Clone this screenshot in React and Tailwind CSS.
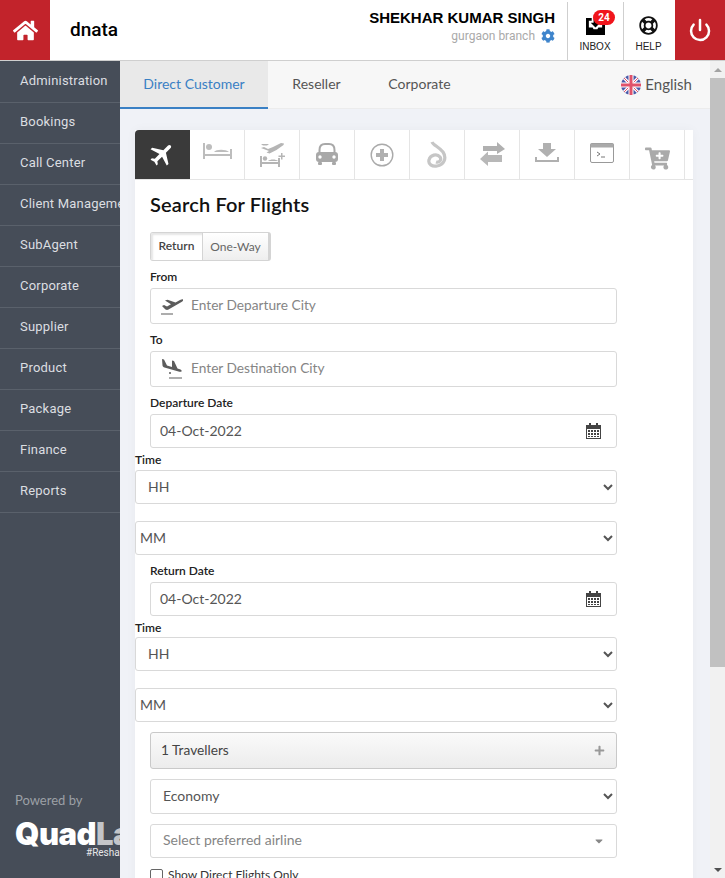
import { Power } from "lucide-react";
import { FaHome, FaCog, FaCartPlus, FaPlus, FaCaretDown, FaRegLifeRing } from "react-icons/fa";
import { MdFlight } from "react-icons/md";

const MENU = ["Administration", "Bookings", "Call Center", "Client Management", "SubAgent", "Corporate", "Supplier", "Product", "Package", "Finance", "Reports"];

/* ---------------- ICONS ---------------- */
const BedIcon = () => (
  <svg width="29" height="16" viewBox="0 0 29 16" fill="#bdbdbd" className="mb-[7px]">
    <rect x="0" y="0" width="2" height="16" />
    <rect x="27" y="6" width="2" height="10" />
    <rect x="0" y="11" width="29" height="2" />
    <circle cx="6" cy="4" r="3" />
    <path d="M11 9c2-3 12-3 15 0z" />
  </svg>
);

const FlightHotelIcon = () => (
  <svg width="25" height="24" viewBox="0 0 25 24" fill="#b5b5b5">
    <path d="M1 5l3-1 4 2 5-2 8-4 3 .5-.5 1.500-7 5-7 3.500-3-1 2.500-1.500z" />
    <path d="M1 1h8l-2 1.500H3z" />
    <rect x="0" y="13" width="2" height="11" />
    <rect x="18" y="15" width="2" height="9" />
    <rect x="0" y="19" width="20" height="2" />
    <circle cx="5" cy="15.500" r="2.200" />
    <path d="M8 18c2-2 8-2 10 0z" />
    <path d="M21 10h1.500v2.500H25V14h-2.500v2.500H21V14h-2.500v-1.500H21z" />
  </svg>
);

const CarIcon = () => (
  <svg width="22" height="23" viewBox="0 0 22 23" fill="#a8a8a8">
    <path d="M3.500 10V7c0-3.500 2-6 5.500-6h4c3.500 0 5.500 2.500 5.500 6v3" fill="none" stroke="#a8a8a8" strokeWidth="2" />
    <rect x="0" y="9" width="22" height="10" rx="3" />
    <circle cx="4" cy="14" r="1.700" fill="#fff" />
    <circle cx="18" cy="14" r="1.700" fill="#fff" />
    <rect x="2" y="19" width="4" height="3" rx="1" />
    <rect x="16" y="19" width="4" height="3" rx="1" />
  </svg>
);

const MedicalIcon = () => (
  <svg width="24" height="24" viewBox="0 0 24 24">
    <circle cx="12" cy="12" r="10.800" fill="none" stroke="#aaa" strokeWidth="1.400" />
    <path d="M10 6h4v4h4v4h-4v4h-4v-4H6v-4h4z" fill="#b0b0b0" />
  </svg>
);

const ScribbleIcon = () => (
  <svg width="20" height="27" viewBox="0 0 20 27" fill="none" stroke="#c6c6c6" strokeWidth="3.200">
    <path d="M5 1c1 3 7 5 11 10 4 6 1 13-6 14-5 1-9-2-8-6 1-5 8-7 11-3 2 3-1 6-4 5" />
  </svg>
);

const ExchangeIcon = () => (
  <svg width="25" height="25" viewBox="0 0 25 25" fill="#b0b0b0">
    <path d="M3 4h14V0l8 7-8 5V9H3z" />
    <path d="M22 13H8V9.500L0 17l8 7v-4h14z" fill="#b8b8b8" />
  </svg>
);

const DownloadIcon = () => (
  <svg width="24" height="19" viewBox="0 0 24 19" fill="#b0b0b0" className="mb-[5px]">
    <path d="M8 0h8v6h5l-9 8-9-8h5z" />
    <path d="M0 14h2v3h20v-3h2v5H0z" />
  </svg>
);

const TerminalIcon = () => (
  <svg width="24" height="20" viewBox="0 0 24 20" className="mb-[4px]">
    <rect x="0.500" y="0.500" width="23" height="19" rx="1.500" fill="#fff" stroke="#999" />
    <rect x="0.500" y="0.500" width="23" height="4" fill="#aaa" />
    <path d="M7 9l3 2-3 2" fill="none" stroke="#777" />
    <path d="M11 14h4" stroke="#777" />
  </svg>
);

const InboxIcon = () => (
  <svg width="19" height="19" viewBox="0 0 20 20" fill="#000">
    <path d="M0 2h6v3H3v7h4l1 2h4l1-2h4V5h3v15H0z" />
    <path d="M8 2h4v5h3l-5 5-5-5h3z" />
  </svg>
);

const CalendarIcon = () => (
  <svg width="15" height="16" viewBox="0 0 15 16" fill="#444">
    <path d="M0 2h3V0h2v2h5V0h2v2h3v14H0zM1 6v9h13V6z" />
    <path d="M2 7h2v2H2zM5 7h2v2H5zM8 7h2v2H8zM11 7h2v2h-2zM2 10h2v2H2zM5 10h2v2H5zM8 10h2v2H8zM11 10h2v2h-2zM2 13h2v1H2zM5 13h2v1H5zM8 13h2v1H8zM11 13h2v1h-2z" />
  </svg>
);

const UkFlag = () => (
  <svg width="20" height="20" viewBox="0 0 20 20">
    <circle cx="10" cy="10" r="10" fill="#4a5aa8" />
    <path d="M3 3l14 14M17 3L3 17" stroke="#fff" strokeWidth="3" />
    <path d="M3 3l14 14M17 3L3 17" stroke="#e0526a" strokeWidth="1" />
    <path d="M10 0v20M0 10h20" stroke="#fff" strokeWidth="5" />
    <path d="M10 0v20M0 10h20" stroke="#e0526a" strokeWidth="3" />
  </svg>
);

const TakeoffIcon = () => (
  <svg width="22" height="18" viewBox="0 0 22 18" fill="#5c5c5c">
    <path d="M1 9l2-1 3 1.500 4-2.200-6-3.800 2.500-.8 8 2.800 4.500-2.500c1-.5 3-1 3.500-.5.300.8-1 2-2 2.500l-13 7.500c-1 .5-2 .5-3 0z" />
    <rect x="0" y="16.500" width="12" height="1" />
  </svg>
);

const LandingIcon = () => (
  <svg width="22" height="20" viewBox="0 0 22 20" fill="#5c5c5c">
    <path d="M1 0l2 .5 3 6 5 1.500V1.500l2 .6 3.500 7.500 3 1c1 .4 1.500 1.500 1 2-1 .4-2 .2-3 0l-14-4c-1-.3-1.800-1-2-2z" />
    <circle cx="9" cy="14" r="1" />
    <rect x="8" y="18.500" width="13" height="1" />
  </svg>
);

const ICON_TABS = [
  <MdFlight size={29} color="#fff" className="rotate-45" />,
  <BedIcon />,
  <FlightHotelIcon />,
  <CarIcon />,
  <MedicalIcon />,
  <ScribbleIcon />,
  <ExchangeIcon />,
  <DownloadIcon />,
  <TerminalIcon />,
  <FaCartPlus size={25} color="#aaa" className="mt-[7px]" />,
];

/* ---------------- FORM PARTS ---------------- */
const FieldLabel = ({ children, className = "" }) => (
  <div className={`text-[12px] leading-[14px] font-semibold text-[#222] ${className}`}>{children}</div>
);

const CityInput = ({ icon, placeholder, className = "" }) => (
  <div className={`flex items-center h-[36px] border border-[#d9d9d9] rounded-[3px] bg-white ${className}`}>
    <div className="w-[40px] flex justify-center pl-[2px]">{icon}</div>
    <span className="pb-[1px] text-[13.700px] text-[#858585]">{placeholder}</span>
  </div>
);

const DateInput = ({ value, className = "" }) => (
  <div className={`flex items-center justify-between h-[34px] pl-[9px] pr-[15px] border border-[#d9d9d9] rounded-[3px] bg-white text-[14px] text-[#555] ${className}`}>
    <span className="pb-[2px]">{value}</span>
    <CalendarIcon />
  </div>
);

const SelectBox = ({ value, className = "" }) => (
  <select
    defaultValue={value}
    className={`block h-[34px] pb-[2px] bg-white border border-[#d9d9d9] rounded-[3px] text-[14px] text-[#555] outline-none ${className}`}
  >
    <option>{value}</option>
  </select>
);

export default function App() {
  return (
    <div className="h-[878px] w-[725px] overflow-hidden flex flex-col bg-white font-['Lato',sans-serif]">
      {/* HEADER */}
      <header className="h-[61px] shrink-0 flex border-b border-[#cfcfcf] font-['Roboto',sans-serif]">
        <div className="w-[50px] bg-[#c2232b] flex items-center justify-center">
          <FaHome size={25} color="#fff" />
        </div>
        <div className="ml-[20px] flex items-center text-[19px] font-medium text-black">dnata</div>
        <div className="ml-auto mr-[12px] flex flex-col items-end pt-[8px]">
          <div className="text-[15px] leading-[19px] font-bold text-black font-['Liberation_Sans',sans-serif]">SHEKHAR KUMAR SINGH</div>
          <div className="flex items-center gap-[6px] text-[12px] leading-[18px] text-[#a9a9a9]">
            gurgaon branch <FaCog size={14} color="#3f85cc" />
          </div>
        </div>
        <div className="w-[56px] border-l border-[#cfcfcf] mt-[2px] flex flex-col items-center pt-[14px] pr-[1px] relative">
          <InboxIcon />
          <span className="absolute top-[8px] left-[25px] w-[22px] h-[15px] rounded-full bg-[#f0151c] text-white text-[10px] leading-[15px] text-center font-bold">24</span>
          <span className="text-[10px] leading-[12px] mt-[6px] text-[#222] font-['Liberation_Sans',sans-serif]">INBOX</span>
        </div>
        <div className="w-[52px] border-l border-[#cfcfcf] mt-[2px] flex flex-col items-center pt-[14px] pr-[2px]">
          <FaRegLifeRing size={19} color="#111" />
          <span className="text-[10px] leading-[12px] mt-[6px] text-[#222] font-['Liberation_Sans',sans-serif]">HELP</span>
        </div>
        <div className="w-[50px] bg-[#c2232b] flex items-center justify-center">
          <Power size={24} color="#fff" strokeWidth={2.500} />
        </div>
      </header>

      <div className="flex flex-1 min-h-0">
        {/* SIDEBAR */}
        <aside className="w-[120px] shrink-0 pt-[1px] bg-[#464d58] flex flex-col overflow-hidden font-['Roboto',sans-serif]">
          {MENU.map(item => (
            <div key={item} className="h-[41px] shrink-0 pl-[20px] pt-[10px] border-b border-[#5a616b] text-[13px] leading-[17px] tracking-[0.2px] text-[#dcdee1] whitespace-nowrap">
              {item}
            </div>
          ))}
          <div className="mt-auto pl-[15px] pb-[20px]">
            <div className="text-[13px] leading-[16px] text-[#9ca0a6] font-['Lato',sans-serif]">Powered by</div>
            <div className="mt-[9px] text-[31px] leading-[33px] font-black whitespace-nowrap text-white font-['Inter',sans-serif] tracking-[-0.5px]">
              Quad<span className="text-[#c3c5c9]">Labs</span>
            </div>
            <div className="ml-[71px] -mt-[2px] text-[10px] leading-[10px] text-[#e6e7e9] whitespace-nowrap">#Reshaping</div>
          </div>
        </aside>

        {/* MAIN */}
        <main className="w-[590px] bg-[#f0f2f7] overflow-hidden">
          <div className="h-[48px] flex bg-[#f7f7f7] border-b border-[#ececec] text-[14px] text-[#555]">
            <div className="w-[148px] h-[48px] pb-[2px] bg-[#e9e9e9] border-b-2 border-[#3a80c4] flex items-center justify-center text-[#3a80c4]">Direct Customer</div>
            <div className="w-[97px] pb-[2px] flex items-center justify-center">Reseller</div>
            <div className="w-[109px] pb-[2px] flex items-center justify-center">Corporate</div>
            <div className="ml-auto mr-[18px] flex items-center gap-[4px] text-[15px]">
              <UkFlag /> English
            </div>
          </div>

          <section className="ml-[15px] mt-[21px] w-[558px] bg-white shadow-[0_0_10px_rgba(0,0,0,0.04)]">
            <div className="h-[50px] flex border-b border-[#e5e5e5]">
              {ICON_TABS.map((icon, i) => (
                <div key={i} className={`w-[55px] flex items-center justify-center ${i === 0 ? "bg-[#3a3a3a] rounded-tl-[4px]" : "border-r border-[#e5e5e5]"}`}>
                  {icon}
                </div>
              ))}
            </div>

            <div className="pb-[40px]">
              <h2 className="ml-[15px] mt-[12px] text-[20px] leading-[24px] font-semibold tracking-[0.15px] text-[#111]">Search For Flights</h2>

              <div className="ml-[15px] mt-[16px] flex w-[121px] h-[29px] border border-[#d4d4d4] border-r-[3px] rounded-[3px] text-[12px] overflow-hidden">
                <div className="w-[52px] pb-[2px] flex items-center justify-center bg-white border-r border-[#d4d4d4] text-[#444] font-semibold shadow-[inset_2px_2px_2px_rgba(0,0,0,0.1)]">Return</div>
                <div className="flex-1 flex items-center justify-center bg-gradient-to-b from-white to-[#eee] text-[#666]">One-Way</div>
              </div>

              <FieldLabel className="ml-[15px] mt-[9px]">From</FieldLabel>
              <CityInput className="ml-[15px] mt-[4px] w-[467px]" icon={<TakeoffIcon />} placeholder="Enter Departure City" />
              <FieldLabel className="ml-[15px] mt-[9px]">To</FieldLabel>
              <CityInput className="ml-[15px] mt-[4px] w-[467px]" icon={<LandingIcon />} placeholder="Enter Destination City" />

              <FieldLabel className="ml-[15px] mt-[9px]">Departure Date</FieldLabel>
              <DateInput className="ml-[15px] mt-[4px] w-[467px]" value="04-Oct-2022" />
              <FieldLabel className="mt-[5px] font-normal">Time</FieldLabel>
              <SelectBox className="mt-[3px] w-[482px] pl-[8px]" value="HH" />
              <SelectBox className="mt-[17px] w-[482px]" value="MM" />

              <FieldLabel className="ml-[15px] mt-[9px]">Return Date</FieldLabel>
              <DateInput className="ml-[15px] mt-[4px] w-[467px]" value="04-Oct-2022" />
              <FieldLabel className="mt-[5px] font-normal">Time</FieldLabel>
              <SelectBox className="mt-[2px] w-[482px] pl-[8px]" value="HH" />
              <SelectBox className="mt-[17px] w-[482px]" value="MM" />

              <div className="ml-[15px] mt-[10px] w-[467px] h-[37px] flex items-center justify-between pl-[10px] pr-[11px] border border-[#c9c9c9] rounded-[3px] bg-gradient-to-b from-[#fafafa] to-[#ececec] text-[13.700px] text-[#444]">
                <span className="pb-[1px]">1 Travellers</span>
                <FaPlus size={11} color="#999" />
              </div>
              <SelectBox className="ml-[15px] mt-[10px] w-[467px] pl-[8px] !h-[35px]" value="Economy" />
              <div className="ml-[15px] mt-[10px] w-[467px] h-[34px] flex items-center justify-between pl-[12px] pr-[11px] border border-[#d9d9d9] rounded-[3px] text-[14px] text-[#858585]">
                <span className="pb-[3px]">Select preferred airline</span>
                <FaCaretDown size={12} color="#888" />
              </div>
              <label className="ml-[15px] mt-[10px] flex items-center gap-[5px] text-[12px] leading-[14px] text-[#333]">
                <span className="w-[13px] h-[13px] rounded-[2px] border border-[#666] bg-white" />
                Show Direct Flights Only
              </label>
            </div>
          </section>
        </main>

        {/* SCROLLBAR */}
        <div className="w-[15px] shrink-0 bg-[#f1f1f1] flex flex-col items-center">
          <div className="h-[17px] flex items-center justify-center">
            <div className="w-0 h-0 border-x-[4px] border-x-transparent border-b-[4px] border-b-[#a3a3a3]" />
          </div>
          <div className="w-full h-[589px] bg-[#c1c1c1]" />
          <div className="mt-auto h-[17px] flex items-center justify-center">
            <div className="w-0 h-0 border-x-[4px] border-x-transparent border-t-[4px] border-t-[#505050]" />
          </div>
        </div>
      </div>
    </div>
  );
}
